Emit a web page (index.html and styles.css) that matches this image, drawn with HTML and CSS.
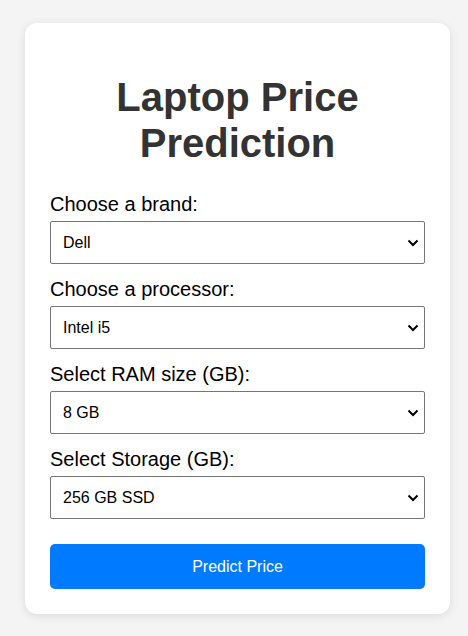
FILE: index.html
```html
<!DOCTYPE html>
<html lang="en">
<head>
<meta charset="utf-8">
<title>Laptop Price Prediction</title>
<link rel="stylesheet" href="styles.css">
</head>
<body>
<div class="card">
  <h1 class="title">Laptop Price Prediction</h1>
  <form class="form">
    <label class="label" for="brand">Choose a brand:</label>
    <div class="select-wrap">
      <select class="select" id="brand">
        <option>Dell</option>
        <option>HP</option>
        <option>Lenovo</option>
      </select>
      <svg class="chevron" width="12" height="8" viewBox="0 0 12 8"><path d="M1.5 1.5 L6 6 L10.5 1.5" fill="none" stroke="#000" stroke-width="2"/></svg>
    </div>
    <label class="label" for="processor">Choose a processor:</label>
    <div class="select-wrap">
      <select class="select" id="processor">
        <option>Intel i5</option>
        <option>Intel i7</option>
      </select>
      <svg class="chevron" width="12" height="8" viewBox="0 0 12 8"><path d="M1.5 1.5 L6 6 L10.5 1.5" fill="none" stroke="#000" stroke-width="2"/></svg>
    </div>
    <label class="label" for="ram">Select RAM size (GB):</label>
    <div class="select-wrap">
      <select class="select" id="ram">
        <option>8 GB</option>
        <option>16 GB</option>
      </select>
      <svg class="chevron" width="12" height="8" viewBox="0 0 12 8"><path d="M1.5 1.5 L6 6 L10.5 1.5" fill="none" stroke="#000" stroke-width="2"/></svg>
    </div>
    <label class="label" for="storage">Select Storage (GB):</label>
    <div class="select-wrap">
      <select class="select" id="storage">
        <option>256 GB SSD</option>
        <option>512 GB SSD</option>
      </select>
      <svg class="chevron" width="12" height="8" viewBox="0 0 12 8"><path d="M1.5 1.5 L6 6 L10.5 1.5" fill="none" stroke="#000" stroke-width="2"/></svg>
    </div>
    <button class="button" type="button">Predict Price</button>
  </form>
</div>
</body>
</html>
```
FILE: styles.css
```css
html, body {
  margin: 0;
  padding: 0;
}
body {
  background: #f4f4f4;
  font-family: "Liberation Sans", Arial, sans-serif;
  padding: 23px 0 0 25px;
  min-height: 636px;
  box-sizing: border-box;
}
.card {
  width: 425px;
  box-sizing: border-box;
  background: #fff;
  border-radius: 12px;
  padding: 25px;
  box-shadow: 0 2px 10px rgba(0, 0, 0, 0.1);
}
.title {
  font-size: 40px;
  font-weight: bold;
  color: #333;
  text-align: center;
  margin: 26px 0 27px;
  line-height: 46px;
}
.form {
  display: flex;
  flex-direction: column;
}
.label {
  display: block;
  font-size: 20px;
  line-height: 23px;
  color: #000;
  margin-bottom: 5px;
}
.select-wrap {
  position: relative;
  margin-bottom: 14px;
}
.select {
  display: block;
  width: 100%;
  height: 43px;
  padding: 10px 30px 10px 12px;
  font-size: 16px;
  font-family: "Liberation Sans", Arial, sans-serif;
  border: 1px solid #767676;
  border-radius: 2px;
  background: #fff;
  color: #000;
  box-sizing: border-box;
  -webkit-appearance: none;
  appearance: none;
}
.chevron {
  position: absolute;
  right: 6px;
  top: 18px;
  pointer-events: none;
}
.button {
  margin-top: 11px;
  height: 45px;
  width: 100%;
  background: #007bff;
  color: #fff;
  border: none;
  border-radius: 5px;
  font-size: 16px;
  font-family: "Liberation Sans", Arial, sans-serif;
}
```
